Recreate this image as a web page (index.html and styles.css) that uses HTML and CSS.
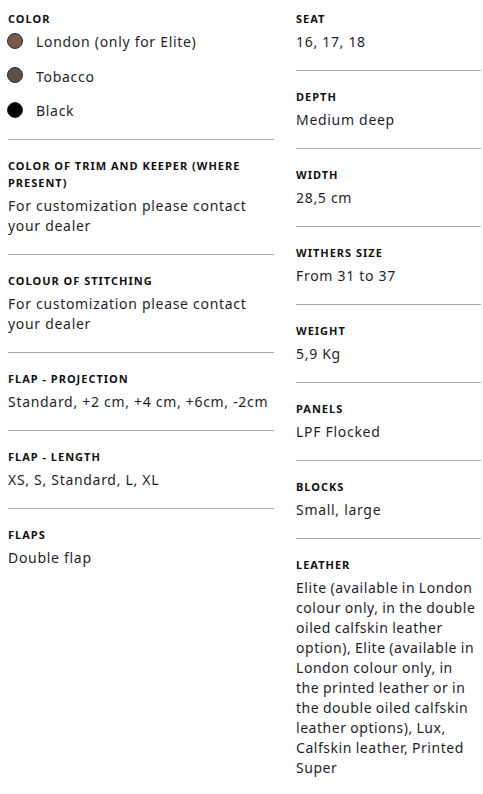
FILE: index.html
```html
<!DOCTYPE html>
<html lang="en">
<head>
  <meta charset="UTF-8">
  <meta name="viewport" content="width=device-width, initial-scale=1.0">
  <title>Saddle details</title>
  <link rel="stylesheet" href="styles.css">
</head>
<body>
  <div class="specs">
    <div class="column">
      <div class="spec">
        <div class="spec-label">Color</div>
        <ul class="colors">
          <li><span class="dot dot-london"></span>London (only for Elite)</li>
          <li><span class="dot dot-tobacco"></span>Tobacco</li>
          <li><span class="dot dot-black"></span>Black</li>
        </ul>
      </div>
      <div class="spec">
        <div class="spec-label">Color of trim and keeper (where present)</div>
        <div class="spec-value">For customization please contact your dealer</div>
      </div>
      <div class="spec">
        <div class="spec-label">Colour of stitching</div>
        <div class="spec-value">For customization please contact your dealer</div>
      </div>
      <div class="spec">
        <div class="spec-label">Flap - projection</div>
        <div class="spec-value">Standard, +2 cm, +4 cm, +6cm, -2cm</div>
      </div>
      <div class="spec">
        <div class="spec-label">Flap - length</div>
        <div class="spec-value">XS, S, Standard, L, XL</div>
      </div>
      <div class="spec">
        <div class="spec-label">Flaps</div>
        <div class="spec-value">Double flap</div>
      </div>
    </div>

    <div class="column">
      <div class="spec">
        <div class="spec-label">Seat</div>
        <div class="spec-value">16, 17, 18</div>
      </div>
      <div class="spec">
        <div class="spec-label">Depth</div>
        <div class="spec-value">Medium deep</div>
      </div>
      <div class="spec">
        <div class="spec-label">Width</div>
        <div class="spec-value">28,5 cm</div>
      </div>
      <div class="spec">
        <div class="spec-label">Withers size</div>
        <div class="spec-value">From 31 to 37</div>
      </div>
      <div class="spec">
        <div class="spec-label">Weight</div>
        <div class="spec-value">5,9 Kg</div>
      </div>
      <div class="spec">
        <div class="spec-label">Panels</div>
        <div class="spec-value">LPF Flocked</div>
      </div>
      <div class="spec">
        <div class="spec-label">Blocks</div>
        <div class="spec-value">Small, large</div>
      </div>
      <div class="spec">
        <div class="spec-label">Leather</div>
        <div class="spec-value spec-value-long">Elite (available in London colour only, in the double oiled calfskin leather option), Elite (available in London colour only, in the&nbsp;printed leather or in the double oiled calfskin leather options), Lux, Calfskin leather, Printed Super</div>
      </div>
    </div>
  </div>
</body>
</html>
```

FILE: styles.css
```css
body {
  margin: 0;
  padding: 10px 0 0 8px;
  background-color: #ffffff;
  font-family: "Noto Sans", Arial, sans-serif;
  color: #1f1f2b;
  overflow-x: hidden;
}

.specs {
  display: grid;
  grid-template-columns: 266px 185px;
  column-gap: 22px;
  align-items: start;
}

.spec {
  padding: 17px 0 18px;
  border-top: 1px solid #a9a9a9;
}

.spec:first-child {
  padding-top: 0;
  border-top: none;
}

.spec-label {
  font-size: 11px;
  font-weight: 700;
  line-height: 17px;
  letter-spacing: 1px;
  text-transform: uppercase;
  color: #111111;
  margin-bottom: 5px;
}

.spec-value {
  font-size: 14px;
  line-height: 20px;
  letter-spacing: 0.7px;
}

.spec-value-long {
  letter-spacing: 0.55px;
  word-spacing: -0.5px;
}

.colors {
  list-style: none;
  margin: 0;
  padding: 0;
  display: flex;
  flex-direction: column;
  gap: 14.5px;
}

.colors li {
  display: flex;
  align-items: center;
  font-size: 14px;
  line-height: 20px;
  letter-spacing: 0.7px;
}

.dot {
  width: 14px;
  height: 14px;
  border-radius: 50%;
  border: 1px solid #2b2b2b;
  margin: -3px 13px 0 -1px;
  flex-shrink: 0;
}

.dot-london {
  background-color: #7b5a4b;
}

.dot-tobacco {
  background-color: #5c504c;
}

.dot-black {
  background-color: #000000;
}
```
